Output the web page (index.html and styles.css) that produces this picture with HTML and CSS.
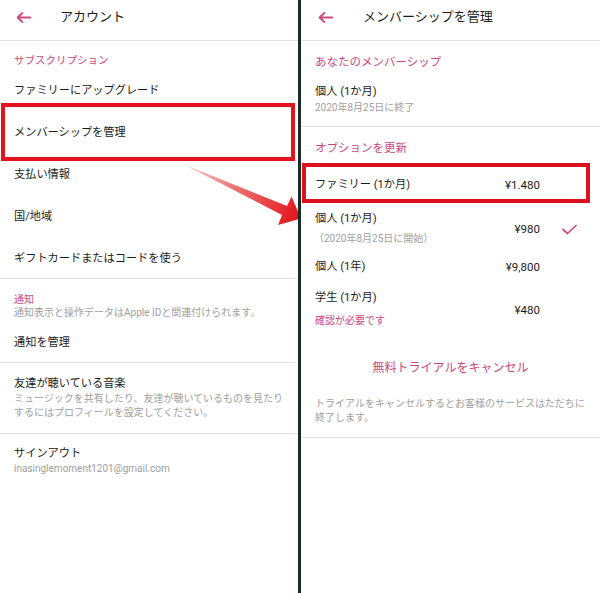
FILE: index.html
```html
<!DOCTYPE html>
<html lang="ja">
<head>
<meta charset="utf-8">
<title>アカウント / メンバーシップを管理</title>
<link rel="stylesheet" href="styles.css">
</head>
<body>
<div class="screen">
  <section class="panel panel-left">
    <header class="appbar">
      <svg class="back" viewBox="0 0 15 11" width="15" height="11"><path d="M14.5 5.5H1.8M6.3 1L1.6 5.5L6.3 10" fill="none" stroke="#cf4a7b" stroke-width="1.8" stroke-linecap="round" stroke-linejoin="round"/></svg>
      <h1 class="appbar-title">アカウント</h1>
    </header>
    <div class="group group-sub">
      <div class="label label-sub">サブスクリプション</div>
      <div class="item">ファミリーにアップグレード</div>
      <div class="item item-mark-left">メンバーシップを管理</div>
      <div class="item">支払い情報</div>
      <div class="item">国/地域</div>
      <div class="item">ギフトカードまたはコードを使う</div>
    </div>
    <div class="group">
      <div class="label label-notice">通知</div>
      <div class="hint">通知表示と操作データはApple IDと関連付けられます。</div>
      <div class="item">通知を管理</div>
    </div>
    <div class="group group-friends">
      <div class="title">友達が聴いている音楽</div>
      <div class="hint">ミュージックを共有したり、友達が聴いているものを見たり<br>するにはプロフィールを設定してください。</div>
    </div>
    <div class="signout">
      <div class="title">サインアウト</div>
      <div class="hint">inasinglemoment1201@gmail.com</div>
    </div>
  </section>

  <div class="divider"></div>

  <section class="panel panel-right">
    <header class="appbar">
      <svg class="back" viewBox="0 0 15 11" width="15" height="11"><path d="M14.5 5.5H1.8M6.3 1L1.6 5.5L6.3 10" fill="none" stroke="#cf4a7b" stroke-width="1.8" stroke-linecap="round" stroke-linejoin="round"/></svg>
      <h1 class="appbar-title">メンバーシップを管理</h1>
    </header>
    <div class="group group-current">
      <div class="label label-big label-current">あなたのメンバーシップ</div>
      <div class="title">個人 (1か月)</div>
      <div class="hint hint-line">2020年8月25日に終了</div>
    </div>
    <div class="group group-options">
      <div class="label label-big label-options">オプションを更新</div>
      <div class="plan plan-single plan-mark">
        <div class="plan-info"><div class="title">ファミリー (1か月)</div></div>
        <div class="price">¥1.480</div>
        <div class="check-cell"></div>
      </div>
      <div class="plan plan-current">
        <div class="plan-info">
          <div class="title">個人 (1か月)</div>
          <div class="hint hint-line plan-sub">（2020年8月25日に開始）</div>
        </div>
        <div class="price">¥980</div>
        <div class="check-cell">
          <svg viewBox="0 0 15 11" width="15" height="11"><path d="M1 5.5L5.5 9.5L14 1.5" fill="none" stroke="#c84a7c" stroke-width="1.7" stroke-linecap="round" stroke-linejoin="round"/></svg>
        </div>
      </div>
      <div class="plan plan-year">
        <div class="plan-info"><div class="title">個人 (1年)</div></div>
        <div class="price">¥9,800</div>
        <div class="check-cell"></div>
      </div>
      <div class="plan plan-student">
        <div class="plan-info">
          <div class="title">学生 (1か月)</div>
          <div class="note plan-sub-student">確認が必要です</div>
        </div>
        <div class="price">¥480</div>
        <div class="check-cell"></div>
      </div>
      <div class="cancel">無料トライアルをキャンセル</div>
      <div class="hint cancel-note">トライアルをキャンセルするとお客様のサービスはただちに<br>終了します。</div>
    </div>
  </section>

  <svg class="pointer-arrow" viewBox="0 0 600 593" width="600" height="593">
    <defs>
      <linearGradient id="arrowGrad" x1="184" y1="165" x2="300" y2="218" gradientUnits="userSpaceOnUse">
        <stop offset="0" stop-color="#f6cccc"/>
        <stop offset="0.45" stop-color="#ee7070"/>
        <stop offset="1" stop-color="#e3121a"/>
      </linearGradient>
    </defs>
    <polygon points="184,164.5 287,206 291.5,196.5 301,218.5 278,225 282,215" fill="url(#arrowGrad)"/>
  </svg>
</div>
</body>
</html>
```

FILE: styles.css
```css
* { box-sizing: border-box; }

html, body {
  margin: 0;
  padding: 0;
  background: #ffffff;
}

body {
  font-family: Roboto, "Noto Sans CJK JP", sans-serif;
  color: #1c1c1c;
}

.screen {
  position: relative;
  display: flex;
  width: 600px;
  height: 593px;
  overflow: hidden;
  background: #ffffff;
}

.panel {
  display: flex;
  flex-direction: column;
}

.panel-left { width: 298px; }
.panel-right { width: 299px; }

.divider {
  position: relative;
  z-index: 2;
  width: 3px;
  background: #1b2c27;
}

/* app bar */
.appbar {
  display: flex;
  align-items: flex-start;
  height: 41px;
  padding-top: 9px;
  border-bottom: 1px solid #e2e2e2;
}

.back {
  display: block;
  margin: 3px 0 0 16px;
  flex: none;
}

.appbar-title {
  margin: 0 0 0 29px;
  font-size: 13px;
  font-weight: normal;
  line-height: 16px;
  color: #1c1c1c;
}

.panel-right .back { margin-left: 17px; }
.panel-right .appbar-title { margin-left: 30px; }

/* groups */
.group {
  border-bottom: 1px solid #e4e4e4;
}

.label {
  color: #c84a7c;
  padding: 0 14px;
}

.label-sub {
  padding-top: 13px;
  font-size: 10.5px;
  line-height: 14px;
}

.label-notice {
  padding-top: 14px;
  font-size: 10px;
  line-height: 13px;
}

.label-big {
  padding-top: 14px;
  padding-bottom: 13px;
  font-size: 11.5px;
  line-height: 14px;
}

.label-current { padding-bottom: 15px; }
.label-options { padding-bottom: 12px; }

.item {
  display: flex;
  align-items: center;
  height: 42px;
  padding: 0 14px;
  font-size: 11.2px;
}

.item-mark-left { position: relative; }

.item-mark-left::after {
  content: "";
  position: absolute;
  top: -7px;
  bottom: -9px;
  left: 1px;
  right: 3px;
  border: 4px solid #e3131d;
}

.title {
  font-size: 11.2px;
  line-height: 16px;
  padding: 0 14px;
}

.hint {
  font-size: 10px;
  line-height: 14px;
  color: #a0a0a0;
  padding: 0 14px;
}

.hint-line { line-height: 16px; }

.group-friends {
  padding-top: 13px;
  padding-bottom: 13px;
}

.signout {
  padding-top: 12px;
}

.group-current { padding-bottom: 10px; }

/* plans */
.plan {
  display: flex;
  align-items: center;
}

.plan-info { flex: 1; }

.plan-single { padding: 10px 0; }
.plan-current { padding: 8px 0 4px; }
.plan-year { padding: 8px 0; }
.plan-student { padding: 7px 0 6px; }

.plan-sub { margin-top: 4px; padding-left: 13px; }

.plan-sub-student { margin-top: 7px; }

.note {
  font-size: 10px;
  line-height: 16px;
  color: #c84a7c;
  padding: 0 14px;
}

.price {
  font-size: 11.5px;
  line-height: 16px;
  color: #1c1c1c;
  text-align: right;
}

.check-cell {
  display: flex;
  align-items: center;
  width: 60px;
  height: 16px;
  padding-left: 22px;
  flex: none;
}

.check-cell svg { display: block; }

.plan-mark { position: relative; }

.plan-mark::after {
  content: "";
  position: absolute;
  top: -4px;
  bottom: 0;
  left: 1px;
  right: 10px;
  border: 4px solid #dc111d;
}

.cancel {
  padding: 25px 0 21px;
  text-align: center;
  font-size: 12px;
  line-height: 16px;
  color: #c84a7c;
}

.cancel-note { padding-bottom: 12px; }

/* annotation arrow */
.pointer-arrow {
  position: absolute;
  left: 0;
  top: 0;
  z-index: 1;
  pointer-events: none;
}
```
